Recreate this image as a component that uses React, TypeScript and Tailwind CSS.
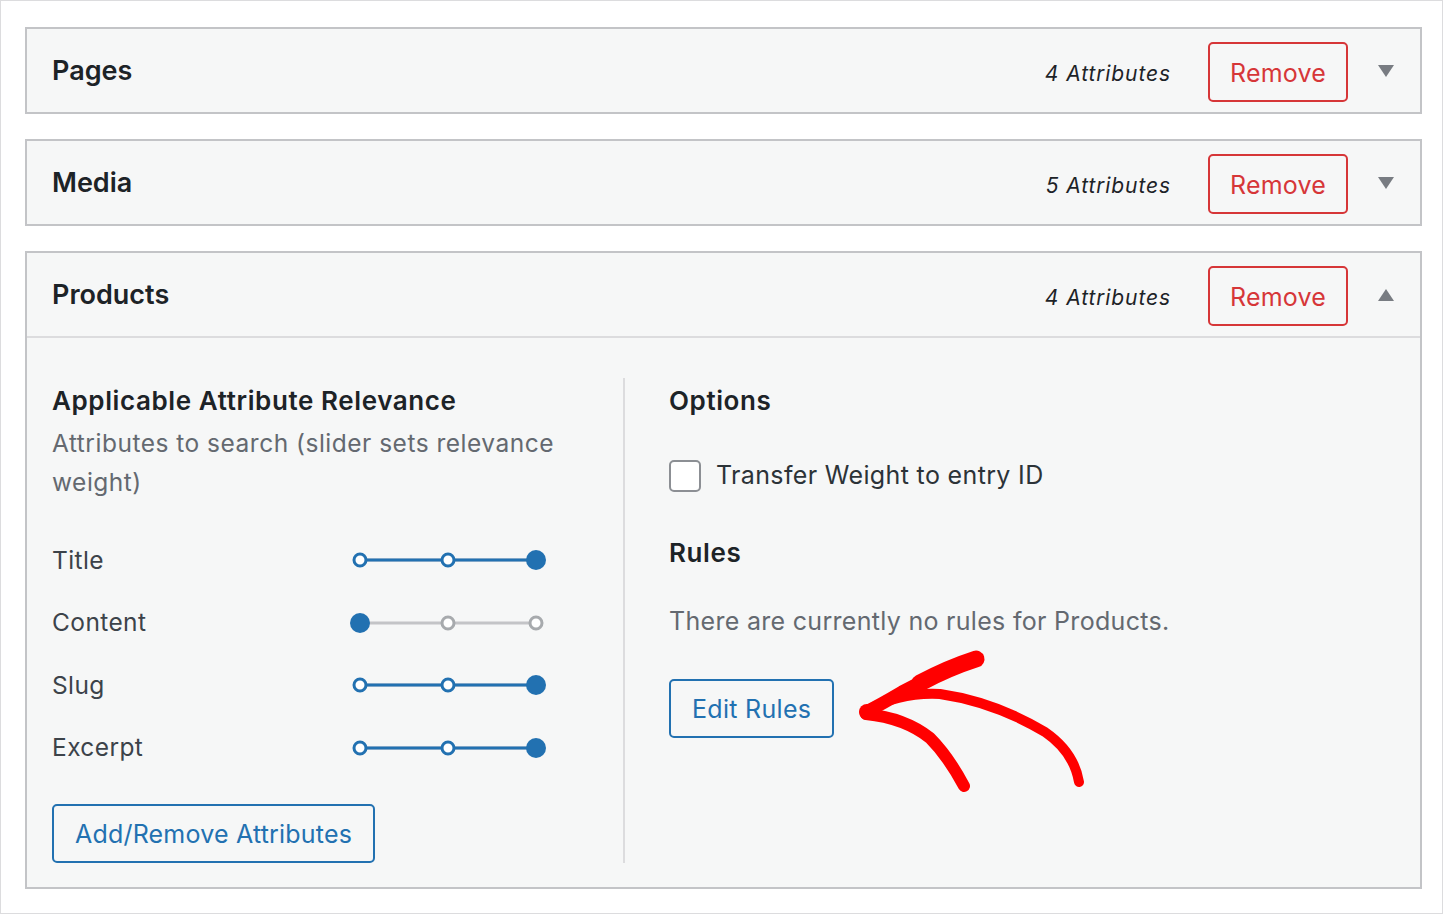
import React from "react";

const FONT = { fontFamily: 'Inter, "Noto Sans", Arial, sans-serif' };

type Attr = { label: string; value: number };

const ATTRS: Attr[] = [
  { label: "Title", value: 2 },
  { label: "Content", value: 0 },
  { label: "Slug", value: 2 },
  { label: "Excerpt", value: 2 },
];

function Caret({ up }: { up?: boolean }) {
  return (
    <svg width="16" height="12" viewBox="0 0 16 12" className="flex-none">
      {up ? <path d="M8 0 L16 12 L0 12 Z" fill="#787c82" /> : <path d="M0 0 L16 0 L8 12 Z" fill="#787c82" />}
    </svg>
  );
}

function Slider({ value }: { value: number }) {
  const xs = [10, 98, 186];
  const blue = "#2271b1";
  const grey = "#c3c4c7";
  return (
    <svg width="196" height="24" viewBox="0 0 196 24" className="flex-none">
      <line x1="10" y1="12" x2="186" y2="12" stroke={grey} strokeWidth="3" />
      <line x1="10" y1="12" x2={xs[value]} y2="12" stroke={blue} strokeWidth="3" />
      {xs.map((x, i) =>
        i === value ? (
          <circle key={i} cx={x} cy="12" r="10" fill={blue} />
        ) : (
          <circle key={i} cx={x} cy="12" r="6" fill="#fff" stroke={i < value ? blue : "#a7aaad"} strokeWidth="3" />
        )
      )}
    </svg>
  );
}

function PanelHeader({ title, count, open }: { title: string; count: number; open?: boolean }) {
  return (
    <div className="h-[83px] flex items-center pl-[25px] pr-[26px] pt-[1px]">
      <h3 className="text-[27px] font-semibold text-[#1d2327] flex-1">{title}</h3>
      <span className="italic text-[21px] text-[#1d2327] tracking-[0.9px] mt-[5px]">{count} Attributes</span>
      <button className="ml-[37px] mt-[1px] w-[140px] h-[60px] pt-[4px] rounded-[5px] border-2 border-[#d63638] text-[#d63638] text-[25px] tracking-[0.2px] bg-[#f6f7f7]">
        Remove
      </button>
      <div className="ml-[30px]">
        <Caret up={open} />
      </div>
    </div>
  );
}

function Arrow() {
  return (
    <svg className="absolute left-0 top-0 pointer-events-none" width="1444" height="916" viewBox="0 0 1444 916">
      <g fill="none" stroke="#ff0000" strokeLinecap="round" strokeLinejoin="round">
        <path d="M976 660 Q935 674 902 692 Q880 705 866 712" strokeWidth="13" />
        <path d="M976 659 Q948 668 920 683" strokeWidth="17" />
        <path d="M866 714 Q905 718 930 738 Q948 756 964 786" strokeWidth="12" />
        <path d="M868 710 Q900 692 940 694 Q995 702 1045 732 Q1074 752 1079 782" strokeWidth="10" />
      </g>
      <circle cx="867" cy="712" r="8" fill="#ff0000" />
    </svg>
  );
}

export default function App() {
  return (
    <div className="relative w-[1444px] h-[916px] bg-white" style={FONT}>
      <div className="w-[1443px] h-[914px] border border-[#dcdcde] pt-[26px] pl-[24px]">
        <div className="w-[1397px] flex flex-col gap-[25px]">
          <div className="border-2 border-[#c3c4c7] bg-[#f6f7f7]">
            <PanelHeader title="Pages" count={4} />
          </div>
          <div className="border-2 border-[#c3c4c7] bg-[#f6f7f7]">
            <PanelHeader title="Media" count={5} />
          </div>
          <div className="border-2 border-[#c3c4c7] bg-[#f6f7f7]">
            <PanelHeader title="Products" count={4} open />
            <div className="border-t-2 border-[#dcdcde] flex pt-[40px] pb-[24px] pl-[25px]">
              {/* Relevance column */}
              <div className="w-[573px] flex-none border-r-2 border-[#dcdcde]">
                <h4 className="text-[26px] leading-[46px] font-semibold text-[#1d2327] tracking-[0.6px]">Applicable Attribute Relevance</h4>
                <p className="text-[24.5px] leading-[39px] text-[#646970] tracking-[0.5px] w-[520px]">
                  Attributes to search (slider sets relevance weight)
                </p>
                <div className="mt-[27px]">
                  {ATTRS.map((a) => (
                    <div key={a.label} className="h-[62.5px] flex items-center">
                      <span className="w-[298px] text-[24.5px] text-[#3c434a] tracking-[0.4px]">{a.label}</span>
                      <Slider value={a.value} />
                    </div>
                  ))}
                </div>
                <button className="mt-[25px] h-[59px] px-[21px] pt-[3px] rounded-[5px] border-2 border-[#2271b1] text-[#2271b1] text-[25px] tracking-[0.2px]">
                  Add/Remove Attributes
                </button>
              </div>
              {/* Options column */}
              <div className="pl-[44px]">
                <h4 className="text-[26px] leading-[46px] font-semibold text-[#1d2327] tracking-[0.6px]">Options</h4>
                <label className="mt-[33px] flex items-center gap-[15px]">
                  <span className="w-[32px] h-[32px] rounded-[5px] border-2 border-[#8c8f94] bg-white flex-none" />
                  <span className="text-[25px] text-[#2c3338] tracking-[0.35px]">Transfer Weight to entry ID</span>
                </label>
                <h4 className="mt-[35px] text-[26px] leading-[46px] font-semibold text-[#1d2327] tracking-[0.6px]">Rules</h4>
                <p className="mt-[26px] text-[25px] leading-[39px] text-[#646970] tracking-[0.3px]">There are currently no rules for Products.</p>
                <button className="mt-[38px] h-[59px] px-[21px] pt-[4px] rounded-[5px] border-2 border-[#2271b1] text-[#2271b1] text-[25px] tracking-[0.3px]">
                  Edit Rules
                </button>
              </div>
            </div>
          </div>
        </div>
      </div>
      <Arrow />
    </div>
  );
}
